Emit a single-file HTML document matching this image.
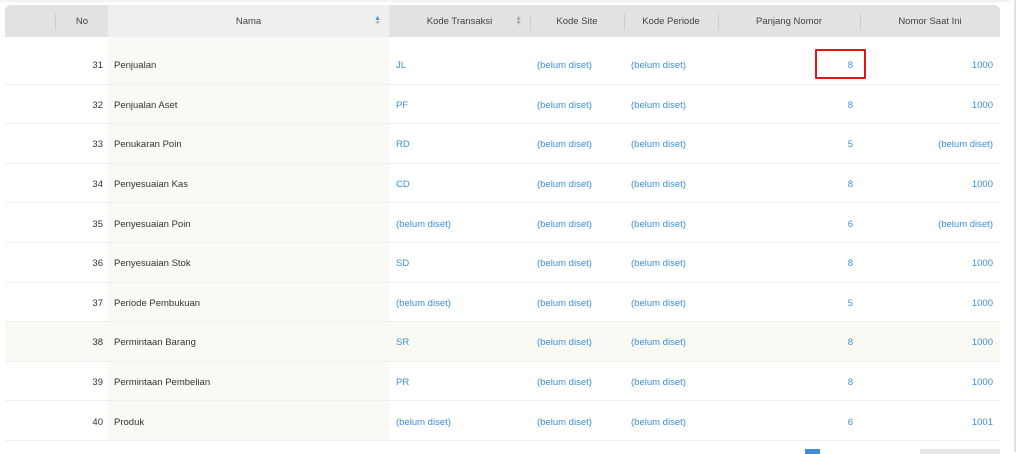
<!DOCTYPE html>
<html><head><style>
body{margin:0;width:1024px;height:452px;overflow:hidden;background:#fff;font-family:"Liberation Sans",sans-serif;font-size:9.5px;color:#333;position:relative}
.hdr{position:absolute;left:5px;top:5px;width:995px;height:32px;background:#e2e2e2;border-radius:6px 6px 0 0}
.c{position:absolute;top:0;height:100%;display:flex;align-items:center;box-sizing:border-box}
.row .c{padding-top:4px}
.h .c{justify-content:center;color:#444}
.row{position:absolute;left:5px;width:995px;height:39.6px;border-bottom:1px solid #eef0ea}
.b{color:#3b8fd9}
.namebg{position:absolute;left:108px;top:37px;width:281px;height:403px;background:#f9faf4}
.sep{position:absolute;top:9px;width:1px;height:16px;background:#ccc}
</style></head><body>
<div style="position:absolute;left:0;top:0;width:1010px;height:2px;background:#f3f3f3"></div>
<div class="namebg"></div>
<div class="row" style="top:321px;background:#f9faf4"></div>
<div class="hdr h">
<div class="c" style="left:0;width:103px;justify-content:flex-end;padding-right:20px">No</div>
<div class="sep" style="left:50px"></div>
<div class="c" style="left:103px;width:281px;background:#efefef">Nama<span style="position:absolute;right:8px;font-size:7px;line-height:5px;color:#4a90d9">▲<br><span style="color:#bbb">▼</span></span></div>
<div class="c" style="left:384px;width:141px">Kode Transaksi<span style="position:absolute;right:8px;font-size:7px;line-height:5px;color:#aaa">▲<br>▼</span></div>
<div class="sep" style="left:525px"></div>
<div class="c" style="left:525px;width:94px">Kode Site</div>
<div class="sep" style="left:619px"></div>
<div class="c" style="left:619px;width:94px">Kode Periode</div>
<div class="sep" style="left:713px"></div>
<div class="c" style="left:713px;width:142px">Panjang Nomor</div>
<div class="sep" style="left:855px"></div>
<div class="c" style="left:855px;width:140px">Nomor Saat Ini</div>
</div>
<div id="rows"></div>
<div style="position:absolute;left:815px;top:49px;width:47px;height:26px;border:2.5px solid #e41515;border-radius:1px"></div>
<div style="position:absolute;left:805px;top:449px;width:15px;height:5px;background:#3b8fd9"></div>
<div style="position:absolute;left:920px;top:449px;width:80px;height:5px;background:#e6e6e6"></div>
<div style="position:absolute;left:1014px;top:0;width:2px;height:452px;background:#e0e0e0"></div>
<script>
var d=[[31,"Penjualan","JL","8","1000"],[32,"Penjualan Aset","PF","8","1000"],[33,"Penukaran Poin","RD","5","(belum diset)"],[34,"Penyesuaian Kas","CD","8","1000"],[35,"Penyesuaian Poin","(belum diset)","6","(belum diset)"],[36,"Penyesuaian Stok","SD","8","1000"],[37,"Periode Pembukuan","(belum diset)","5","1000"],[38,"Permintaan Barang","SR","8","1000"],[39,"Permintaan Pembelian","PR","8","1000"],[40,"Produk","(belum diset)","6","1001"]];
var h="";d.forEach(function(r,i){var t=44+i*39.6;
h+='<div class="row" style="top:'+t+'px;background:transparent"><div class="c" style="left:0;width:98px;justify-content:flex-end">'+r[0]+'</div><div class="c" style="left:109px">'+r[1]+'</div><div class="c b" style="left:391px">'+r[2]+'</div><div class="c b" style="left:532px">(belum diset)</div><div class="c b" style="left:626px">(belum diset)</div><div class="c b" style="left:713px;width:135px;justify-content:flex-end">'+r[3]+'</div><div class="c b" style="left:855px;width:133px;justify-content:flex-end">'+r[4]+'</div></div>';});
document.getElementById("rows").innerHTML=h;
</script>
</body></html>
